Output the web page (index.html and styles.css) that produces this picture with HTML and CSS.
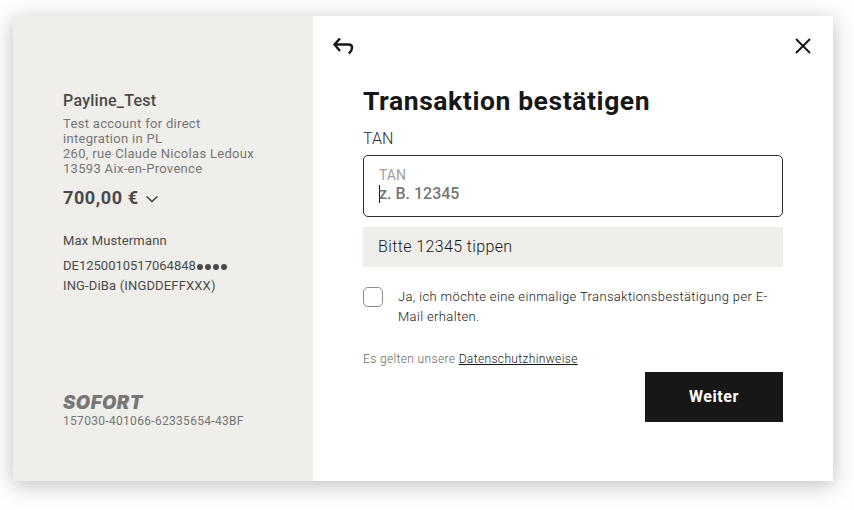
FILE: index.html
```html
<!DOCTYPE html>
<html lang="de">
<head>
  <meta charset="UTF-8">
  <meta name="viewport" content="width=device-width, initial-scale=1">
  <title>Transaktion bestätigen</title>

  <link rel="stylesheet" href="styles.css">
</head>

<body>

  <div class="wizard">
    <aside class="summary">
      <h2 class="merchant">Payline_Test</h2>
      <p class="address">
        <span>Test account for direct</span>
        <span>integration in PL</span>
        <span>260, rue Claude Nicolas Ledoux</span>
        <span>13593 Aix-en-Provence</span>
      </p>
      <div class="amount">
        <span>700,00 €</span>
        <svg width="12" height="8" viewBox="0 0 12 8"><path d="M.5 1.200 6 6.600l5.500-5.400"/></svg>
      </div>
      <p class="holder">Max Mustermann</p>
      <p class="iban">DE1250010517064848<span class="mask"><i></i><i></i><i></i><i></i></span></p>
      <p class="bank">ING-DiBa (INGDDEFFXXX)</p>

      <div class="reference">
        <div class="logo">SOFORT</div>
        <div class="transaction">157030-401066-62335654-43BF</div>
      </div>
    </aside>

    <main class="content">
      <div class="toolbar">
        <svg class="back" width="22" height="18" viewBox="0 0 22 18"><path d="M7 .500 1.500 6.500 7 13M1.500 6.500H15.500c4.600 0 4.800 5 .4 9.200"/></svg>
        <svg class="close" width="16" height="16" viewBox="0 0 16 16"><path d="M1 1l14 14M15 1 1 15"/></svg>
      </div>

      <form class="tan-form">
        <h1>Transaktion bestätigen</h1>
        <p class="tan-title">TAN</p>
        <div class="field">
          <label for="tan">TAN</label>
          <div class="entry">
            <span class="caret"></span>
            <input type="text" id="tan" placeholder="z. B. 12345">
          </div>
        </div>
        <div class="hint">Bitte 12345 tippen</div>
        <label class="confirm">
          <input type="checkbox">
          <span>Ja, ich möchte eine einmalige Transaktionsbestätigung per E-<br>Mail erhalten.</span>
        </label>
        <p class="legal">Es gelten unsere <a href="#">Datenschutzhinweise</a></p>
        <button type="button">Weiter</button>
      </form>
    </main>
  </div>

</body>
</html>
```
FILE: styles.css
```css
* {
  box-sizing: border-box;
}

body {
  margin: 0;
  padding: 16px 21px 0 13px;
  height: 510px;
  overflow: hidden;
  background-color: #fffefc;
  font-family: Roboto, "Liberation Sans", sans-serif;
  color: #2c2b31;
}

h1, h2, p {
  margin: 0;
}

svg {
  display: block;
  fill: none;
  stroke: #171717;
  stroke-width: 2;
}

.wizard {
  display: flex;
  width: 820px;
  height: 465px;
  background-color: #fff;
  box-shadow: 0 4px 20px rgba(0, 0, 0, 0.25);
}

/* left column */
.summary {
  display: flex;
  flex-direction: column;
  width: 300px;
  padding: 75px 0 50px 50px;
  background-color: #efeeea;
  color: #4a4a4a;
  font-size: 13px;
  line-height: 20px;
}

.merchant {
  font-size: 16px;
  font-weight: 500;
  letter-spacing: 0.25px;
}

.address {
  margin-top: 5px;
  line-height: 15px;
  color: #767676;
  letter-spacing: 0.31px;
}

.address span {
  display: block;
}

.amount {
  display: flex;
  align-items: center;
  gap: 7px;
  margin-top: 10px;
  font-size: 18px;
  font-weight: 700;
  line-height: 24px;
  letter-spacing: 0.6px;
}

.amount svg {
  margin-top: 2px;
  stroke: #4a4a4a;
  stroke-width: 1.5;
}

.holder {
  margin-top: 21px;
  letter-spacing: 0.15px;
}

.iban {
  display: flex;
  align-items: center;
  margin-top: 5px;
}

.mask {
  display: flex;
  gap: 2px;
  margin: 1px 0 0 1px;
}

.mask i {
  width: 6px;
  height: 6px;
  border-radius: 50%;
  background-color: #4a4a4a;
}

.bank {
  letter-spacing: 0.15px;
}

.reference {
  margin-top: auto;
  color: #767676;
}

.logo {
  font-family: Inter, sans-serif;
  font-size: 18.5px;
  font-weight: 900;
  font-style: italic;
  line-height: 18px;
  letter-spacing: 0.5px;
}

.transaction {
  font-size: 12px;
  letter-spacing: 0.31px;
}

/* right column */
.content {
  flex: 1;
  padding: 22px 22px 0 20px;
}

.toolbar {
  display: flex;
  justify-content: space-between;
  height: 48px;
}

.back {
  stroke-width: 2.4;
}

.tan-form {
  display: flex;
  flex-direction: column;
  width: 420px;
  margin-left: 30px;
}

h1 {
  font-size: 26.5px;
  line-height: 30px;
  color: #171717;
  letter-spacing: 0.58px;
}

.tan-title {
  margin-top: 13px;
  font-size: 16px;
  font-weight: 300;
  line-height: 20px;
}

.field {
  height: 62px;
  margin-top: 6px;
  padding: 9px 15px;
  border: 1px solid #2c2b31;
  border-radius: 5px;
}

.field label {
  display: block;
  font-size: 14px;
  line-height: 20px;
  color: #a0a0a0;
}

.entry {
  display: flex;
  align-items: center;
  height: 18px;
}

.caret {
  width: 1px;
  height: 18px;
  background-color: #171717;
}

.field input {
  flex: 1;
  height: 18px;
  margin-left: -1px;
  padding: 0;
  border: 0;
  outline: none;
  background: none;
  font: 500 16px/18px Roboto, sans-serif;
}

.field input::placeholder {
  color: #767676;
}

.hint {
  height: 40px;
  margin-top: 10px;
  padding-left: 15px;
  background-color: #efeeea;
  font-size: 16px;
  font-weight: 350;
  line-height: 39px;
  color: #171717;
  letter-spacing: 0.38px;
}

.confirm {
  display: flex;
  gap: 15px;
  margin-top: 20px;
  font-size: 13px;
  font-weight: 350;
  line-height: 20px;
  color: #171717;
  letter-spacing: 0.36px;
}

.confirm input {
  appearance: none;
  width: 20px;
  height: 20px;
  margin: 0;
  border: 1px solid #8c8c8c;
  border-radius: 5px;
}

.legal {
  margin-top: 22px;
  font-size: 12px;
  font-weight: 350;
  line-height: 20px;
  color: #666;
  letter-spacing: 0.36px;
}

.legal a {
  color: #171717;
}

button {
  align-self: flex-end;
  width: 138px;
  height: 50px;
  margin-top: 3px;
  padding-bottom: 3px;
  border: 0;
  background-color: #171717;
  color: #fff;
  font: 700 16px Roboto, sans-serif;
  letter-spacing: 0.6px;
}
```
